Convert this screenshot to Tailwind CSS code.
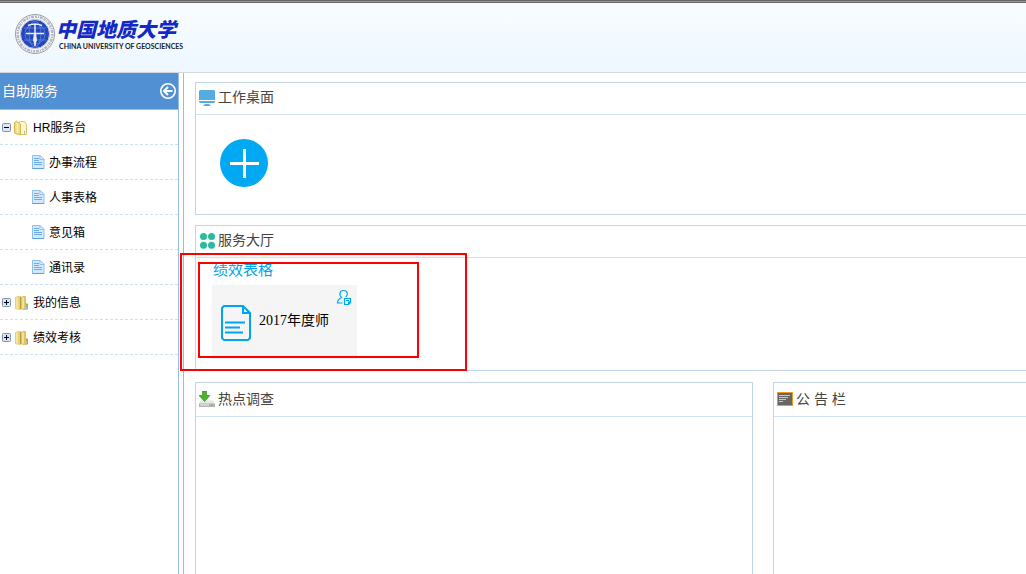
<!DOCTYPE html>
<html lang="zh-CN">
<head>
    <meta charset="UTF-8">
    <meta name="viewport" content="width=device-width, initial-scale=1.0">
    <title>自助服务</title>
    <script src="https://cdn.jsdelivr.net/npm/@tailwindcss/browser@4"></script>
</head>
<body class="h-screen flex flex-col overflow-hidden bg-white text-black font-['Liberation_Sans','Noto_Sans_CJK_SC',sans-serif]">
    <!-- shared icons -->
    <svg class="hidden">
        <symbol id="doc" viewBox="0 0 16 16">
            <path d="M.5 1.500h7.500l4 4v9H.5z" fill="#d3e9fd" stroke="#8fc0f0"/>
            <path d="M8 1.500v4h4z" fill="#f4faff" stroke="#8fc0f0"/>
            <path d="M2 4.500h5M2 6.500h5M2 8.500h8M2 10.500h8" stroke="#6fabe8"/>
            <path d="M.5 14.500H12" stroke="#5e9fe0"/>
        </symbol>
        <symbol id="folder" viewBox="0 0 16 16">
            <path d="M0 2l3-1h2v14l-5-1z" fill="#e9d27a"/>
            <path d="M5 1l1 1v12l-1 1z" fill="#b79a3c"/>
            <path d="M6 2l2-1h3v14H8l-2-1z" fill="#dfc462"/>
            <path d="M2 2.500v11M8 2.500v11" stroke="#f7ebb0" stroke-width="1.500"/>
            <path d="M11 8l2 1v5l-2 1z" fill="#c4a544"/>
            <path d="M11.500 11v3" stroke="#7fc6ee"/>
        </symbol>
        <symbol id="folder-open" viewBox="0 0 16 16">
            <path d="M4.500 2.500l2-1h4l2 3v10h-8z" fill="#fdf6d2" stroke="#dcc163"/>
            <path d="M.5 2.500l2-1.500 4 3v11l-6-2z" fill="#f1dc86" stroke="#d3b650"/>
            <path d="M3.500 3v10" stroke="#fbf0bd" stroke-width="1.500"/>
            <path d="M10.500 11v3" stroke="#7fc6ee"/>
        </symbol>
        <symbol id="minus" viewBox="0 0 9 9">
            <rect x=".5" y=".5" width="8" height="8" rx="1" fill="#dde6f0" stroke="#7b93b5"/>
            <path d="M2 4.500h5" stroke="#000"/>
        </symbol>
        <symbol id="plus" viewBox="0 0 9 9">
            <rect x=".5" y=".5" width="8" height="8" rx="1" fill="#dde6f0" stroke="#7b93b5"/>
            <path d="M2 4.500h5M4.500 2v5" stroke="#000"/>
        </symbol>
    </svg>

    <div class="h-[3px] shrink-0 bg-[#9b979b] border-y border-[#666]"></div>
    <header class="h-[70px] shrink-0 flex items-center pl-[14px] pb-2 bg-linear-to-b from-[#f8fdff] to-[#eef7ff] border-b border-[#d3d8dc]">
        <svg class="size-[42px]" viewBox="0 0 42 42">
            <circle cx="21" cy="21" r="19.500" fill="#f3f5f8" stroke="#9a9fa8"/>
            <circle cx="21" cy="21" r="17.300" fill="none" stroke="#b4b7bd" stroke-width="2.400" stroke-dasharray="2 1 1 1 3 1"/>
            <circle cx="21" cy="21" r="14.500" fill="#2347bd" stroke="#c3c9d8"/>
            <g fill="none" stroke="#6f8bdb" stroke-width=".7">
                <circle cx="21" cy="21" r="10"/>
                <ellipse cx="21" cy="21" rx="6" ry="13"/>
                <path d="M10 15h22M10 27h22"/>
            </g>
            <path d="M14 12.500q7-3 14 0M21 11v22M12 20.500h18" fill="none" stroke="#e6ecf8" stroke-width="1.500"/>
            <path d="M20 20h2l1 7-2 6-2-6z" fill="#e6ecf8"/>
        </svg>
        <div>
            <div class="text-[20px] leading-[24px] font-black italic text-[#1428c4] font-['Noto_Sans_CJK_SC',sans-serif]">中国地质大学</div>
            <div class="pl-[3px] text-[7px] leading-[10px] text-[#222] font-['Lato',sans-serif] font-bold whitespace-nowrap">CHINA UNIVERSITY OF GEOSCIENCES</div>
        </div>
    </header>

    <div class="flex flex-1 min-h-0">
        <aside class="w-[179px] shrink-0 border-r border-[#99bbe8]">
            <div class="h-[37px] flex items-center justify-between px-[2px] bg-[#5190d2] border-b border-[#99bbe8]">
                <h1 class="text-[14px] text-white">自助服务</h1>
                <button aria-label="收起" class="size-4">
                    <svg class="size-4" viewBox="0 0 16 16" fill="none" stroke="#fff" stroke-width="1.600">
                        <circle cx="8" cy="8" r="7.200"/>
                        <path d="M12.500 8H4M8 4L4 8l4 4" stroke-width="2"/>
                    </svg>
                </button>
            </div>
            <nav class="text-[12px]">
                <a href="#" class="h-[35px] flex items-center pt-[2px] pl-[2px] border-b border-dashed border-[#c9e1f6]">
                    <svg class="size-[9px] mr-[3px] mb-[2px]"><use href="#minus"/></svg>
                    <svg class="size-4 mr-[3px]"><use href="#folder-open"/></svg>HR服务台
                </a>
                <a href="#" class="h-[35px] flex items-center pt-[2px] pl-8 border-b border-dashed border-[#c9e1f6]">
                    <svg class="size-4 mr-px mb-[2px]"><use href="#doc"/></svg>办事流程
                </a>
                <a href="#" class="h-[35px] flex items-center pt-[2px] pl-8 border-b border-dashed border-[#c9e1f6]">
                    <svg class="size-4 mr-px mb-[2px]"><use href="#doc"/></svg>人事表格
                </a>
                <a href="#" class="h-[35px] flex items-center pt-[2px] pl-8 border-b border-dashed border-[#c9e1f6]">
                    <svg class="size-4 mr-px mb-[2px]"><use href="#doc"/></svg>意见箱
                </a>
                <a href="#" class="h-[35px] flex items-center pt-[2px] pl-8 border-b border-dashed border-[#c9e1f6]">
                    <svg class="size-4 mr-px mb-[2px]"><use href="#doc"/></svg>通讯录
                </a>
                <a href="#" class="h-[35px] flex items-center pt-[2px] pl-[2px] border-b border-dashed border-[#c9e1f6]">
                    <svg class="size-[9px] mr-1 mb-[2px]"><use href="#plus"/></svg>
                    <svg class="size-4 mr-[2px]"><use href="#folder"/></svg>我的信息
                </a>
                <a href="#" class="h-[35px] flex items-center pt-[2px] pl-[2px] border-b border-dashed border-[#c9e1f6]">
                    <svg class="size-[9px] mr-1 mb-[2px]"><use href="#plus"/></svg>
                    <svg class="size-4 mr-[2px]"><use href="#folder"/></svg>绩效考核
                </a>
            </nav>
        </aside>

        <main class="ml-1 flex-1 min-w-0 flex flex-col border-l border-[#99bbe8] pl-[11px] pt-[9px] text-[#444]">
            <section class="h-[133px] shrink-0 border border-r-0 border-[#c3d5e6]">
                <div class="h-8 flex items-center gap-[3px] pl-[3px] pb-[2px] border-b border-[#d0e3f5]">
                    <svg class="size-4" viewBox="0 0 16 16" fill="#55acdf">
                        <path d="M1 0h14l1 1v9H0V1zM0 11h16v1l-1 1H1l-1-1zM6 14h4l2 2H4z"/>
                    </svg>
                    <h2 class="text-[14px]">工作桌面</h2>
                </div>
                <button aria-label="添加" class="block ml-6 mt-6 size-12">
                    <svg class="size-12" viewBox="0 0 48 48">
                        <circle cx="24" cy="24" r="24" fill="#00a9f1"/>
                        <path d="M10 24.500h29M24.500 10v29" stroke="#fff" stroke-width="3"/>
                    </svg>
                </button>
            </section>

            <section class="relative mt-[10px] h-[146px] shrink-0 border border-r-0 border-[#c3d5e6]">
                <div class="h-8 flex items-center gap-[2px] pl-1 pb-[2px] border-b border-[#d0e3f5]">
                    <svg class="size-4" viewBox="0 0 16 16" fill="#2bbb9c">
                        <circle cx="3.500" cy="3.500" r="3.500"/>
                        <circle cx="11.500" cy="3.500" r="3.500"/>
                        <circle cx="3.500" cy="12.200" r="3.500"/>
                        <circle cx="11.500" cy="12.200" r="3.500"/>
                    </svg>
                    <h2 class="text-[14px]">服务大厅</h2>
                </div>
                <h3 class="ml-[17px] mt-[2px] text-[15px] leading-[20px] text-[#00a5ec]">绩效表格</h3>
                <a href="#" class="relative ml-4 mt-[5px] w-[145px] h-[74px] flex items-center gap-2 pl-[9px] pt-[2px] bg-[#f5f5f5] text-black">
                    <svg class="w-[30px] h-9" viewBox="0 0 30 36" fill="none" stroke="#00a5ec" stroke-width="2">
                        <path d="M3 1h19l7 7v25l-2 2H3l-2-2V3zM22 1v7h7"/>
                        <path d="M4 17.500h20M4 22.500h15M4 27.500h18"/>
                    </svg>
                    <span class="text-[14px] leading-[20px] pb-1 font-['Liberation_Serif','Noto_Sans_CJK_SC',serif]">2017年度师</span>
                    <svg class="absolute top-1 right-[5px] size-4" viewBox="0 0 16 16" fill="none" stroke="#00a5ec">
                        <path d="M6 8.500C3 7 3 1.500 7.500 1.500s4.800 4.500 2.300 6.500M6 8.500C3 9.500 1.500 11 1.500 14h5" stroke-width="1.200"/>
                        <path d="M8.500 9.500h6v4l-2 2h-4zM10 11.500h3M12.500 15v-2h2" stroke-width="1.200"/>
                    </svg>
                </a>
                <!-- highlight frames -->
                <div class="pointer-events-none absolute -left-4 top-[27px] w-[287px] h-[118px] border-2 border-[#f00]"></div>
                <div class="pointer-events-none absolute left-[2px] top-9 w-[221px] h-24 border-2 border-[#f00]"></div>
            </section>

            <div class="mt-[11px] flex-1 min-h-0 grid grid-cols-[558fr_253fr] gap-5">
                <section class="border border-b-0 border-[#c3d5e6]">
                    <div class="h-[34px] flex items-center gap-[3px] pl-[3px] border-b border-[#d0e3f5]">
                        <svg class="size-4 mb-[2px]" viewBox="0 0 16 16">
                            <path d="M2 9.500h12l2 3v.5H0v-.5z" fill="#e6e6e6"/>
                            <path d="M0 12.500h16V16H0z" fill="#b5b5b5"/>
                            <path d="M1 14h9" stroke="#eee"/>
                            <path d="M12 14h2" stroke="#53c23c"/>
                            <path d="M3.500 0h4v4.500H11L5.500 10.500 0 4.500h3.500z" fill="#4cb52c" stroke="#2d8519" stroke-width=".6"/>
                        </svg>
                        <h2 class="text-[14px]">热点调查</h2>
                    </div>
                </section>
                <section class="border border-b-0 border-r-0 border-[#c3d5e6]">
                    <div class="h-[34px] flex items-center gap-[3px] pl-[3px] border-b border-[#d0e3f5]">
                        <svg class="size-4 mb-[2px]" viewBox="0 0 16 16">
                            <path d="M.5 1.500h15v13H.5z" fill="#666" stroke="#e8992a"/>
                            <path d="M2 4.500h11M2 6.500h9M2 8.500h7M2 10.500h4" stroke="#c9c9c9"/>
                        </svg>
                        <h2 class="text-[14px]">公 告 栏</h2>
                    </div>
                </section>
            </div>
        </main>
    </div>
</body>
</html>
